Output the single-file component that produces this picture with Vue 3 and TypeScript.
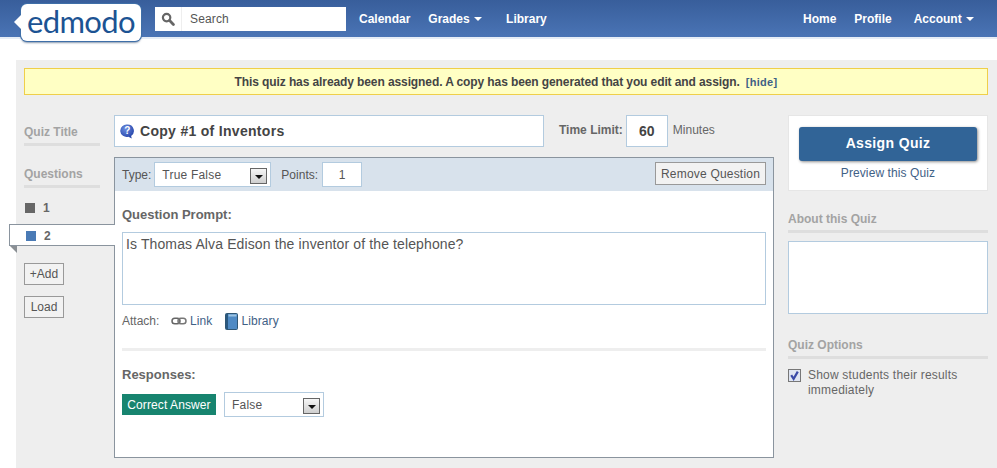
<script setup lang="ts">
const questions = [
  { n: 1, active: false },
  { n: 2, active: true },
]
</script>

<template>
  <div class="page">
    <header class="topbar">
      <div class="logo">
        <span class="logo-tip"></span>
        <span class="logo-text">edmodo</span>
      </div>
      <div class="search">
        <span class="search-icon">
          <svg width="14" height="14" viewBox="0 0 14 14">
            <circle cx="5.6" cy="5.6" r="3.7" fill="none" stroke="#666" stroke-width="2.2" />
            <path d="M8.6 8.6 12.4 12.4" stroke="#666" stroke-width="2.8" stroke-linecap="round" />
          </svg>
        </span>
        <span class="search-text">Search</span>
      </div>
      <nav class="nav">
        <a>Calendar</a>
        <a>Grades <i class="caret"></i></a>
        <a class="library">Library</a>
      </nav>
      <nav class="nav nav-right">
        <a>Home</a>
        <a>Profile</a>
        <a class="account">Account <i class="caret"></i></a>
      </nav>
    </header>

    <main class="content">
      <div class="banner">
        <b>This quiz has already been assigned. A copy has been generated that you edit and assign.</b>
        <a class="hide">[hide]</a>
      </div>

      <div class="columns">
        <aside class="left">
          <h4 class="side-head quiz-title">Quiz Title</h4>
          <h4 class="side-head questions">Questions</h4>
          <ul class="qlist">
            <li v-for="q in questions" :key="q.n" :class="['qitem', { active: q.active }]">
              <span class="sq"></span><b>{{ q.n }}</b>
            </li>
          </ul>
          <button class="small-btn add">+Add</button>
          <button class="small-btn load">Load</button>
        </aside>

        <section class="center">
          <div class="title-row">
            <div class="title-input">
              <svg class="help" width="15" height="15" viewBox="0 0 15 15">
                <defs>
                  <radialGradient id="hg" cx="40%" cy="30%" r="75%">
                    <stop offset="0" stop-color="#6d8fe0" />
                    <stop offset="1" stop-color="#1f3fa6" />
                  </radialGradient>
                </defs>
                <path d="M7.5 .6a6.4 6.2 0 0 1 3.6 11.3L11.8 14.4 8.4 12.7A6.4 6.2 0 1 1 7.5 .6Z" fill="url(#hg)" />
                <text x="7.4" y="10.4" text-anchor="middle" class="help-q">?</text>
              </svg>
              <b>Copy #1 of Inventors</b>
            </div>
            <b class="limit-label">Time Limit:</b>
            <div class="limit-input">60</div>
            <span class="minutes">Minutes</span>
          </div>

          <div class="panel">
            <div class="panel-head">
              <span>Type:</span>
              <div class="select type-select">
                True False
                <span class="arrow"></span>
              </div>
              <span class="points-label">Points:</span>
              <div class="points">1</div>
              <button class="remove">Remove Question</button>
            </div>
            <div class="panel-body">
              <h5 class="prompt-head">Question Prompt:</h5>
              <div class="prompt">Is Thomas Alva Edison the inventor of the telephone?</div>
              <div class="attach">
                <span class="attach-label">Attach:</span>
                <svg class="link-icon" width="16" height="8" viewBox="0 0 16 8">
                  <rect x="1" y="1.2" width="8" height="5.6" rx="2.8" fill="none" stroke="#666" stroke-width="1.5" />
                  <rect x="7" y="1.2" width="8" height="5.6" rx="2.8" fill="none" stroke="#777" stroke-width="1.5" />
                </svg>
                <a>Link</a>
                <svg class="book-icon" width="13" height="17" viewBox="0 0 13 17">
                  <rect x=".5" y=".5" width="12" height="16" rx="1" fill="#4f8ac4" stroke="#2f5674" />
                  <rect x="1" y="1" width="2" height="15" fill="#2a587f" />
                  <rect x="3.5" y="1.5" width="8" height="2" fill="#9cc3e2" />
                </svg>
                <a>Library</a>
              </div>
              <hr class="divider" />
              <h5 class="responses-head">Responses:</h5>
              <div class="answer-row">
                <span class="correct">Correct Answer</span>
                <div class="select answer-select">
                  False
                  <span class="arrow"></span>
                </div>
              </div>
            </div>
          </div>
        </section>

        <aside class="right">
          <div class="assign-box">
            <button class="assign">Assign Quiz</button>
            <a class="preview">Preview this Quiz</a>
          </div>
          <h4 class="side-head about">About this Quiz</h4>
          <div class="about-box"></div>
          <h4 class="side-head options">Quiz Options</h4>
          <label class="option">
            <span class="check">
              <svg width="11" height="11" viewBox="0 0 11 11">
                <path d="M2.2 5.2 4.6 8.8 8.8 1.6" fill="none" stroke="#3a4aa8" stroke-width="2.2" />
              </svg>
            </span>
            <span class="option-text">Show students their results immediately</span>
          </label>
        </aside>
      </div>
    </main>
  </div>
</template>

<style>
html, body { margin: 0; background: #fff; overflow: hidden; }
</style>

<style scoped>
.page {
  width: 997px;
  height: 468px;
  overflow: hidden;
  font-family: "Liberation Sans", Arial, sans-serif;
  font-size: 12px;
  color: #555;
}
h4, h5, ul, p { margin: 0; padding: 0; }
button { font-family: inherit; cursor: default; }

.topbar {
  display: flex;
  height: 37px;
  background: linear-gradient(#385e9b, #4a74b5);
  border-bottom: 2px solid #e6edf6;
  box-sizing: content-box;
  color: #fff;
}
.logo {
  position: relative;
  flex: none;
  width: 120px;
  height: 37px;
  margin: 4px 0 0 21px;
  background: #fff;
  border-radius: 6px;
  box-shadow: 0 0 0 1px #3f6fa8, 0 2px 2px rgba(40, 70, 110, .55);
  text-align: center;
  z-index: 2;
}
.logo-tip {
  position: absolute;
  left: -7px;
  top: 10px;
  width: 0;
  height: 0;
  border-top: 8px solid transparent;
  border-bottom: 8px solid transparent;
  border-right: 8px solid #fff;
}
.logo-text {
  display: block;
  font-family: Lato, sans-serif;
  font-size: 31px;
  line-height: 35px;
  letter-spacing: -.6px;
  color: #1c5393;
}
.search {
  display: flex;
  align-items: center;
  width: 191px;
  height: 24px;
  margin: 7px 0 0 14px;
  background: #fff;
  color: #555;
}
.search-icon {
  display: flex;
  align-items: center;
  justify-content: center;
  width: 27px;
  height: 24px;
  border-right: 1px solid #eee;
  box-sizing: border-box;
}
.search-text { margin-left: 8px; letter-spacing: .15px; }
.nav {
  display: flex;
  align-items: center;
  gap: 18px;
  height: 37px;
  margin-left: 13px;
  font-weight: bold;
  color: #fff;
}
.nav .library { margin-left: 6px; }
.nav-right { margin-left: auto; padding-right: 23px; }
.nav-right .account { margin-left: 4px; }
.caret {
  display: inline-block;
  width: 0;
  height: 0;
  margin-left: 1px;
  vertical-align: 2px;
  border-left: 4px solid transparent;
  border-right: 4px solid transparent;
  border-top: 4px solid #fff;
}

.content {
  height: 408px;
  margin: 21px 0 0 16px;
  padding: 8px 9px 0 8px;
  background: #eee;
  box-sizing: border-box;
}
.banner {
  display: flex;
  justify-content: center;
  align-items: center;
  gap: 6px;
  height: 27px;
  background: #ffffc4;
  border: 1px solid #efcf4a;
  box-sizing: border-box;
  color: #444;
  font-size: 12px;
}
.banner b { letter-spacing: -.1px; }
.hide { color: #3f6186; font-size: 11px; font-weight: bold; letter-spacing: .3px; }

.columns {
  display: flex;
  margin-top: 20px;
}

.left { width: 90px; flex: none; }
.side-head {
  font-size: 12px;
  font-weight: bold;
  color: #a3a3a3;
  border-bottom: 3px solid #dedede;
}
.quiz-title { width: 76px; margin-top: 10px; padding-bottom: 4px; line-height: 14px; }
.questions { width: 76px; margin-top: 21px; padding-bottom: 4px; line-height: 14px; }
.qlist { list-style: none; margin-top: 8px; }
.qitem {
  display: flex;
  align-items: center;
  height: 22px;
  padding-left: 1px;
  padding-top: 1px;
  margin-bottom: 6px;
  box-sizing: border-box;
  color: #666;
}
.qitem b { margin-left: 8px; }
.sq {
  width: 10px;
  height: 10px;
  background: #666;
}
.qitem.active {
  position: relative;
  z-index: 1;
  width: 106px;
  margin-left: -15px;
  padding-left: 16px;
  background: #fff;
  border: 1px solid #8a949e;
  border-right: 0;
}
.qitem.active .sq { background: #4a7ab5; }
.qitem.active::after {
  content: "";
  position: absolute;
  left: 0;
  top: 21px;
  width: 0;
  height: 0;
  border-top: 7px solid #8a8f94;
  border-left: 7px solid transparent;
}
.small-btn {
  display: block;
  height: 22px;
  width: 40px;
  padding: 0;
  font-size: 12px;
  color: #555;
  background: #f2f2f2;
  border: 1px solid #999;
}
.add { margin-top: 17px; }
.load { margin-top: 11px; }

.center { width: 660px; flex: none; }
.title-row {
  display: flex;
  align-items: flex-start;
  height: 32px;
}
.title-input {
  display: flex;
  align-items: center;
  gap: 5px;
  width: 430px;
  height: 32px;
  padding-left: 5px;
  background: #fff;
  border: 1px solid #b3cbdf;
  box-sizing: border-box;
  font-size: 14px;
  letter-spacing: .3px;
  color: #444;
}
.help { flex: none; }
.help-q { font: bold 10px "Liberation Sans", sans-serif; fill: #fff; }
.limit-label { margin: 8px 0 0 15px; color: #666; line-height: 14px; }
.limit-input {
  width: 42px;
  height: 32px;
  margin-left: 3px;
  line-height: 31px;
  text-align: center;
  background: #fff;
  border: 1px solid #b3cbdf;
  box-sizing: border-box;
  font-size: 14px;
  font-weight: bold;
  color: #444;
}
.minutes { margin: 8px 0 0 5px; line-height: 14px; color: #666; }

.panel {
  height: 301px;
  margin-top: 10px;
  background: #fff;
  border: 1px solid #8a949e;
  box-sizing: border-box;
}
.panel-head {
  display: flex;
  align-items: center;
  height: 33px;
  padding: 0 7px;
  background: #d8e2ec;
  color: #555;
}
.select {
  position: relative;
  height: 25px;
  padding-left: 7px;
  line-height: 24px;
  letter-spacing: .2px;
  background: #fff;
  border: 1px solid #b3cbdf;
  box-sizing: border-box;
  color: #555;
}
.type-select { width: 117px; margin-left: 3px; padding-left: 7px; }
.answer-select { width: 100px; margin-left: 8px; }
.arrow {
  position: absolute;
  right: 3px;
  top: 5px;
  width: 17px;
  height: 16px;
  background: linear-gradient(#f6f6f6, #cfcfcf);
  border: 1px solid #666;
  box-sizing: border-box;
}
.arrow::after {
  content: "";
  position: absolute;
  left: 4px;
  top: 6px;
  border-left: 4px solid transparent;
  border-right: 4px solid transparent;
  border-top: 4px solid #111;
}
.points-label { margin-left: 10px; }
.points {
  width: 40px;
  height: 25px;
  margin-left: 4px;
  line-height: 24px;
  text-align: center;
  background: #fff;
  border: 1px solid #b3cbdf;
  box-sizing: border-box;
  color: #555;
}
.remove {
  margin-left: auto;
  margin-bottom: 2px;
  width: 111px;
  height: 23px;
  padding: 0;
  font-size: 12px;
  letter-spacing: .2px;
  color: #555;
  background: #f2f2f2;
  border: 1px solid #999;
}
.panel-body { padding: 0 7px; }
.prompt-head {
  margin-top: 17px;
  font-size: 13px;
  line-height: 14px;
  color: #666;
}
.prompt {
  height: 73px;
  margin-top: 10px;
  padding: 3px 3px;
  font-size: 14px;
  line-height: 16px;
  letter-spacing: .12px;
  background: #fff;
  border: 1px solid #b3cbdf;
  box-sizing: border-box;
  color: #555;
}
.attach {
  display: flex;
  align-items: center;
  height: 18px;
  margin-top: 7px;
  color: #666;
}
.attach a { color: #3f6186; letter-spacing: .1px; }
.attach-label { width: 49px; }
.link-icon { margin-right: 3px; }
.book-icon { margin: 0 3px 0 13px; }
.divider {
  height: 3px;
  margin: 18px 0 0;
  background: #eee;
  border: 0;
}
.responses-head {
  margin-top: 17px;
  font-size: 13px;
  line-height: 14px;
  color: #666;
}
.answer-row {
  display: flex;
  align-items: center;
  margin-top: 10px;
}
.correct {
  width: 94px;
  height: 21px;
  line-height: 22px;
  text-align: center;
  letter-spacing: .1px;
  background: #17846f;
  color: #fff;
}

.right { width: 200px; margin-left: 14px; flex: none; }
.assign-box {
  height: 76px;
  padding-top: 11px;
  background: #fff;
  border: 1px solid #e6e6e6;
  box-sizing: border-box;
  text-align: center;
}
.assign {
  display: block;
  width: 178px;
  height: 34px;
  margin: 0 0 0 10px;
  padding: 0 0 2px;
  font-size: 14px;
  letter-spacing: .35px;
  font-weight: bold;
  color: #fff;
  background: #316497;
  border: 0;
  border-radius: 3px;
  box-shadow: 1px 1px 3px rgba(0, 0, 0, .45);
}
.preview {
  display: block;
  margin-top: 5px;
  line-height: 14px;
  letter-spacing: .1px;
  color: #3f6186;
}
.about { margin-top: 21px; padding-bottom: 4px; line-height: 14px; }
.about-box {
  height: 73px;
  margin-top: 8px;
  background: #fff;
  border: 1px solid #b3cbdf;
  box-sizing: border-box;
}
.options { margin-top: 24px; padding-bottom: 4px; line-height: 14px; }
.option {
  display: flex;
  align-items: flex-start;
  margin-top: 10px;
  line-height: 15px;
  letter-spacing: .2px;
  color: #666;
}
.check {
  display: flex;
  align-items: center;
  justify-content: center;
  flex: none;
  width: 13px;
  height: 13px;
  margin: 0 7px 0 0;
  background: #dfe5f2;
  border: 1px solid #777;
  box-sizing: border-box;
}
.option-text { width: 170px; margin-top: -1px; }
</style>
